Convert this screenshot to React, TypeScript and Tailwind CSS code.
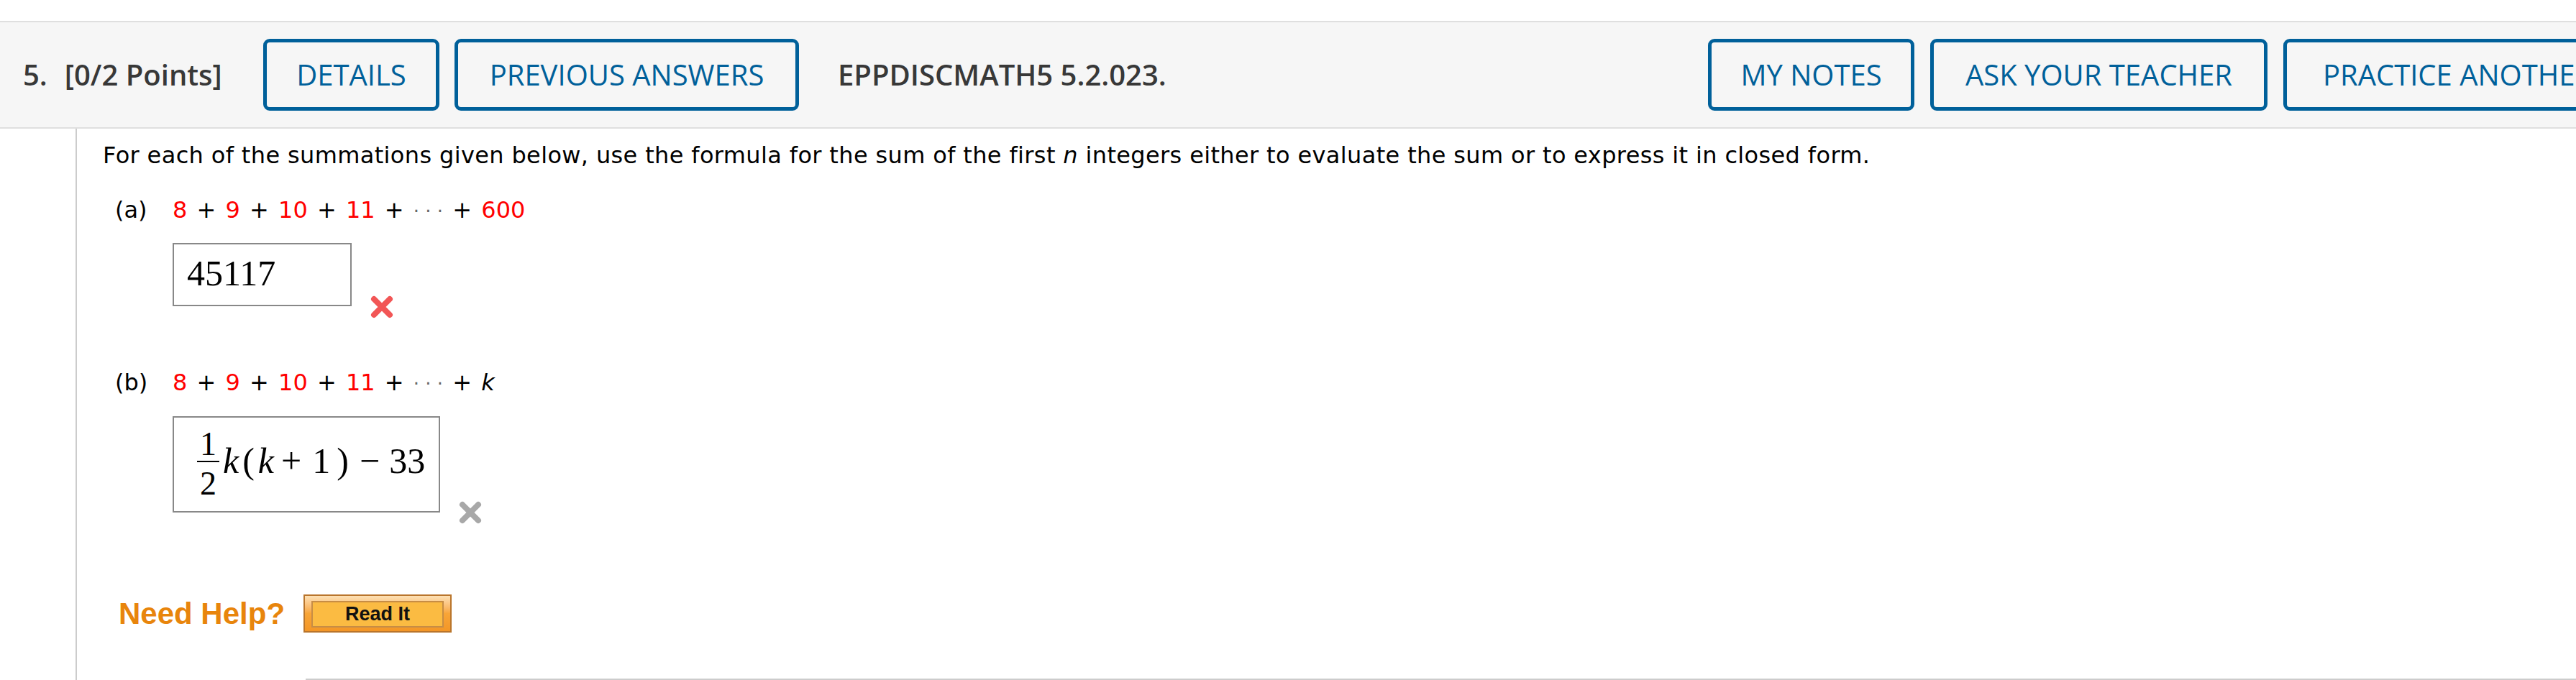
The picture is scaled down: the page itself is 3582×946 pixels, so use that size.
import React from 'react';

const navBtn =
  'shrink-0 h-[100px] flex items-center justify-center border-[5px] border-[#00609a] rounded-[9px] text-[#00609a] text-[40px] whitespace-nowrap';

function CrossMark({ color }: { color: string }) {
  return (
    <svg width="34" height="34" viewBox="0 0 34 34" className="blur-[0.6px]">
      <path d="M6 6 L28 28 M28 6 L6 28" stroke={color} strokeWidth="8" strokeLinecap="round" />
    </svg>
  );
}

function Sum({ last }: { last: React.ReactNode }) {
  return (
    <div className="h-[40px] whitespace-pre leading-[40px] [word-spacing:3px]">
      <span className="text-[#ff0000]">8</span> + <span className="text-[#ff0000]">9</span> +{' '}
      <span className="text-[#ff0000]">10</span> + <span className="text-[#ff0000]">11</span> +{' '}
      <span className="text-[#666666] text-[26px] leading-none [word-spacing:0px]">· · ·</span> + {last}
    </div>
  );
}

export default function App() {
  return (
    <div className="w-[3582px] h-[946px] overflow-hidden bg-white flex flex-col">
      {/* top gap */}
      <div className="h-[29px] shrink-0" />

      {/* question header */}
      <div className="shrink-0 border-y-2 border-[#dfdfdf] bg-[#f6f6f6]">
        <div className="w-[3660px] h-[146px] flex items-center pl-[32px] font-['Open_Sans',sans-serif]">
          <div className="w-[282px] shrink-0 text-[40px] font-semibold text-[#383838] whitespace-nowrap">
            5.<span className="ml-[24px]">[0/2 Points]</span>
          </div>
          <button className={`${navBtn} ml-[52px] w-[245px]`}>DETAILS</button>
          <button className={`${navBtn} ml-[21px] w-[479px]`}>PREVIOUS ANSWERS</button>
          <div className="ml-[54px] shrink-0 text-[40px] font-semibold text-[#383838] whitespace-nowrap">
            EPPDISCMATH5 5.2.023.
          </div>
          <button className={`${navBtn} ml-auto w-[287px]`}>MY NOTES</button>
          <button className={`${navBtn} ml-[22px] w-[469px]`}>ASK YOUR TEACHER</button>
          <button className={`${navBtn} ml-[22px] w-[485px]`}>PRACTICE ANOTHER</button>
        </div>
      </div>

      {/* question body */}
      <div className="flex-1 ml-[105px] border-l-2 border-[#cccccc] pl-[36px] pt-[17px] font-['DejaVu_Sans',Verdana,sans-serif] text-[32px] text-black">
        <p className="leading-[40px] whitespace-nowrap tracking-[0.36px]">
          For each of the summations given below, use the formula for the sum of the first <i>n</i> integers
          either to evaluate the sum or to express it in closed form.
        </p>

        {/* part a */}
        <div className="mt-[36px] flex pl-[17px]">
          <div className="w-[80px] shrink-0 leading-[40px]">(a)</div>
          <div>
            <Sum last={<span className="text-[#ff0000]">600</span>} />
            <div className="mt-[26px] flex items-end">
              <div className="w-[249px] h-[88px] border-2 border-[#888888] pl-[18px] pb-[4px] flex items-center font-['Liberation_Serif',serif] text-[50px] leading-none">
                45117
              </div>
              <div className="ml-[25px] translate-y-[18px]">
                <CrossMark color="#f25656" />
              </div>
            </div>
          </div>
        </div>

        {/* part b */}
        <div className="mt-[86px] flex pl-[17px]">
          <div className="w-[80px] shrink-0 leading-[40px]">(b)</div>
          <div>
            <Sum last={<i>k</i>} />
            <div className="mt-[27px] flex items-end">
              <div className="w-[372px] h-[134px] border-2 border-[#888888] pl-[32px] pb-[10px] flex items-center font-['Liberation_Serif',serif] text-black">
                <div className="mt-[9px] flex flex-col items-center text-[46px] leading-none">
                  <span>1</span>
                  <span className="w-[31px] h-[2px] bg-black" />
                  <span className="mt-[7px]">2</span>
                </div>
                <div className="flex items-center text-[50px] leading-[50px] whitespace-pre">
                  <i className="ml-[5px]">k</i>
                  <span className="ml-[5px]">(</span>
                  <i className="ml-[5px]">k</i>
                  <span className="ml-[10px]">+</span>
                  <span className="ml-[15px]">1</span>
                  <span className="ml-[9px]">)</span>
                  <span className="ml-[15px]">−</span>
                  <span className="ml-[13px]">33</span>
                </div>
              </div>
              <div className="ml-[25px] translate-y-[17px]">
                <CrossMark color="#a8a8a8" />
              </div>
            </div>
          </div>
        </div>

        {/* help */}
        <div className="mt-[114px] flex items-center pl-[22px]">
          <span className="font-['Liberation_Sans',Arial,sans-serif] font-bold text-[42px] leading-none text-[#e8850c]">
            Need Help?
          </span>
          <button className="ml-[26px] w-[206px] h-[53px] border-2 border-[#b9752c] bg-gradient-to-b from-[#fde0b4] via-[#f8a537] to-[#f39626] pt-[7px] pb-[5px] px-[9px]">
            <span className="w-full h-full flex items-center justify-center border-2 border-[#c78d45] bg-[#fbbb42] font-['Liberation_Sans',Arial,sans-serif] font-bold text-[27px] text-[#111111]">
              Read It
            </span>
          </button>
        </div>

        <div className="mt-[64px] ml-[282px] h-[3px] bg-[#cccccc]" />
      </div>
    </div>
  );
}
